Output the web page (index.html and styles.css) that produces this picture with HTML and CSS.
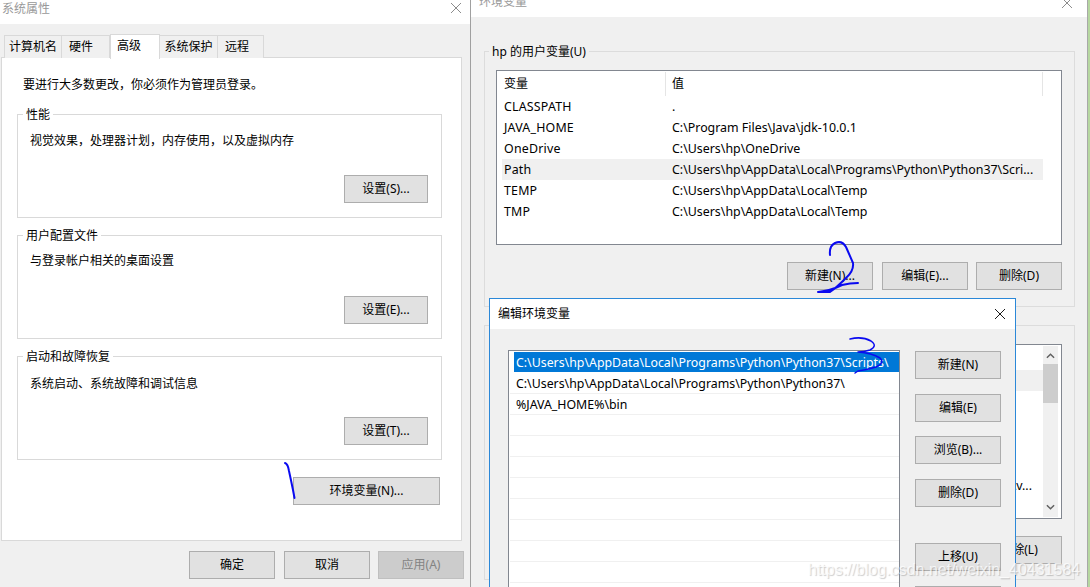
FILE: index.html
```html
<!DOCTYPE html>
<html lang="zh-CN">
<head>
<meta charset="utf-8">
<title>环境变量</title>
<link rel="stylesheet" href="styles.css">
</head>
<body>
<div class="desktop">

  <section class="window sys-window">
    <header class="titlebar sys-title">
      <span class="title-text muted">系统属性</span>
      <svg class="close" viewBox="0 0 10 10"><path d="M0 0L10 10M10 0L0 10"/></svg>
    </header>
    <nav class="tabs">
      <span class="tab">计算机名</span>
      <span class="tab tab-short">硬件</span>
      <span class="tab tab-active">高级</span>
      <span class="tab">系统保护</span>
      <span class="tab tab-last">远程</span>
    </nav>
    <div class="panel">
      <p class="intro">要进行大多数更改，你必须作为管理员登录。</p>
      <div class="sys-group">
        <span class="legend legend-white">性能</span>
        <p class="group-text">视觉效果，处理器计划，内存使用，以及虚拟内存</p>
        <button class="btn btn-set">设置(S)...</button>
      </div>
      <div class="sys-group sys-group-mid">
        <span class="legend legend-white">用户配置文件</span>
        <p class="group-text">与登录帐户相关的桌面设置</p>
        <button class="btn btn-set">设置(E)...</button>
      </div>
      <div class="sys-group sys-group-low">
        <span class="legend legend-white">启动和故障恢复</span>
        <p class="group-text">系统启动、系统故障和调试信息</p>
        <button class="btn btn-set">设置(T)...</button>
      </div>
      <button class="btn btn-env">环境变量(N)...</button>
    </div>
    <footer class="sys-actions">
      <button class="btn">确定</button>
      <button class="btn">取消</button>
      <button class="btn btn-disabled">应用(A)</button>
    </footer>
  </section>

  <section class="window env-window">
    <header class="titlebar env-title">
      <span class="title-text muted env-title-text">环境变量</span>
      <svg class="close env-close" viewBox="0 0 10 10"><path d="M0 0L10 10M10 0L0 10"/></svg>
    </header>
    <div class="env-group env-group-user">
      <span class="legend legend-env">hp 的用户变量(U)</span>
      <div class="listbox">
        <div class="list-main">
          <div class="list-head">
            <span class="head-cell">变量</span>
            <span class="head-cell head-value">值</span>
          </div>
          <div class="var-row"><span class="var-name">CLASSPATH</span><span>.</span></div>
          <div class="var-row"><span class="var-name">JAVA_HOME</span><span>C:\Program Files\Java\jdk-10.0.1</span></div>
          <div class="var-row"><span class="var-name">OneDrive</span><span>C:\Users\hp\OneDrive</span></div>
          <div class="var-row var-row-hl"><span class="var-name">Path</span><span>C:\Users\hp\AppData\Local\Programs\Python\Python37\Scri...</span></div>
          <div class="var-row"><span class="var-name">TEMP</span><span>C:\Users\hp\AppData\Local\Temp</span></div>
          <div class="var-row"><span class="var-name">TMP</span><span>C:\Users\hp\AppData\Local\Temp</span></div>
        </div>
      </div>
      <div class="env-actions">
        <button class="btn">新建(N)...</button>
        <button class="btn">编辑(E)...</button>
        <button class="btn">删除(D)</button>
      </div>
    </div>
    <div class="env-group env-group-sys">
      <div class="listbox">
        <div class="list-main">
          <div class="list-head list-head-blank"></div>
          <div class="var-row var-row-hl"></div>
          <div class="var-row"></div>
          <div class="var-row"></div>
          <div class="var-row"></div>
          <div class="var-row"></div>
          <div class="var-row var-row-end">\v...</div>
        </div>
        <div class="scrollbar">
          <svg class="chev" viewBox="0 0 10 6"><path d="M1 5L5 1L9 5"/></svg>
          <div class="thumb"></div>
          <svg class="chev chev-down" viewBox="0 0 10 6"><path d="M1 1L5 5L9 1"/></svg>
        </div>
      </div>
      <div class="env-actions">
        <button class="btn">新建(W)...</button>
        <button class="btn">编辑(I)...</button>
        <button class="btn">删除(L)</button>
      </div>
    </div>
  </section>

  <section class="window edit-window">
    <header class="titlebar edit-title">
      <span class="title-text">编辑环境变量</span>
      <svg class="close edit-close" viewBox="0 0 10 10"><path d="M0 0L10 10M10 0L0 10"/></svg>
    </header>
    <div class="edit-body">
      <div class="path-list">
        <div class="path-row path-row-selected">C:\Users\hp\AppData\Local\Programs\Python\Python37\Scripts\</div>
        <div class="path-row">C:\Users\hp\AppData\Local\Programs\Python\Python37\</div>
        <div class="path-row">%JAVA_HOME%\bin</div>
        <div class="path-row"></div>
        <div class="path-row"></div>
        <div class="path-row"></div>
        <div class="path-row"></div>
        <div class="path-row"></div>
        <div class="path-row"></div>
        <div class="path-row"></div>
        <div class="path-row"></div>
      </div>
      <div class="edit-actions">
        <button class="btn">新建(N)</button>
        <button class="btn">编辑(E)</button>
        <button class="btn">浏览(B)...</button>
        <button class="btn">删除(D)</button>
        <button class="btn btn-gap">上移(U)</button>
        <button class="btn" aria-label="下移(O)"></button>
      </div>
    </div>
  </section>

  <svg class="ink" viewBox="0 0 1090 587">
    <path d="M285 463Q288 464 289 471Q291 480 293 490L294.500 498"/>
    <path d="M830 255Q829 246 835 243Q842 240 846 247Q850 256 853 263Q854 271 846 278Q836 288 830 292L818 292Q830 291 842 285Q850 283 858 283"/>
    <path class="ink-thin" d="M850 339Q862 336 871 341Q878 346 870 350Q864 352 858 352Q872 353 880 358Q885 363 876 367Q866 370 858 371L855 373"/>
  </svg>

  <span class="watermark">https://blog.csdn.net/weixin_40431584</span>
</div>
</body>
</html>
```

FILE: styles.css
```css
* { box-sizing: border-box; }
html, body { margin: 0; padding: 0; overflow: hidden; }
body {
  font-family: "Noto Sans", "Noto Sans CJK SC", sans-serif;
  font-size: 12px;
  color: #000;
  background: #fff;
}
p { margin: 0; }

.desktop { position: relative; width: 1090px; height: 587px; overflow: hidden; background: #b6d7a0; }
.window { position: absolute; background: #f0f0f0; }

.titlebar {
  display: flex;
  align-items: center;
  justify-content: space-between;
  background: #fff;
}
.title-text { line-height: 17px; }
.muted { color: #999; }
.close { width: 10px; height: 10px; fill: none; stroke: #8c8c8c; stroke-width: 1; }

.btn {
  width: 86px;
  height: 28px;
  padding: 0;
  border: 1px solid #adadad;
  background: #e1e1e1;
  color: #000;
  font: inherit;
  line-height: 26px;
}
.btn-disabled { background: #cccccc; border-color: #bfbfbf; color: #838383; }

/* system properties */
.sys-window {
  left: 0;
  top: 0;
  width: 471px;
  height: 587px;
  border-right: 1px solid #a0a0a0;
}
.sys-title { height: 24px; padding: 0 9px 8px 2px; }
.tabs { display: flex; align-items: flex-end; height: 34px; padding-left: 4px; margin-bottom: -1px; position: relative; }
.tab {
  width: 58px;
  height: 23px;
  border: 1px solid #d9d9d9;
  border-left-width: 0;
  border-bottom-width: 0;
  text-align: center;
  line-height: 22px;
  background: #f0f0f0;
}
.tabs .tab:first-child { border-left-width: 1px; }
.tab-short { width: 48px; padding-right: 9px; }
.tab-last { width: 46px; padding-right: 7px; }
.tab-active {
  width: 50px;
  height: 25px;
  background: #fff;
  border-left-width: 1px;
  margin-bottom: -1px;
  padding-right: 12px;
  line-height: 22px;
  position: relative;
  z-index: 1;
}
.panel {
  width: 461px;
  height: 484px;
  margin-left: 1px;
  border: 1px solid #d9d9d9;
  background: #fff;
  padding: 18px 0 0 15px;
  display: flex;
  flex-direction: column;
}
.intro { margin-left: 6px; line-height: 18px; margin-bottom: 20px; }
.sys-group {
  position: relative;
  width: 425px;
  height: 104px;
  margin-bottom: 17px;
  border: 1px solid #d9d9d9;
  padding: 17px 13px 14px 12px;
  display: flex;
  flex-direction: column;
  justify-content: space-between;
  align-items: flex-start;
}
.sys-group-mid { padding-top: 16px; }
.sys-group-low { padding-top: 18px; }
.group-text { line-height: 18px; }
.btn-set { width: 84px; align-self: flex-end; }
.legend {
  position: absolute;
  left: 5px;
  top: -9px;
  padding: 0 3px;
  line-height: 17px;
  background: #f0f0f0;
}
.legend-white { background: #fff; }
.legend-env { left: 4px; padding: 0 3px; }
.btn-env { width: 147px; align-self: flex-end; margin: 0 21px 0 0; }
.sys-actions { display: flex; gap: 9px; justify-content: flex-end; padding: 10px 6px 0 0; }
.sys-actions .btn-disabled { margin-left: -1px; }

/* environment variables */
.env-window {
  left: 471px;
  top: 0;
  width: 617px;
  height: 587px;
  border-right: 1px solid #a8a8a8;
}
.env-title { height: 17px; padding: 0 15px 0 8px; overflow: hidden; }
.env-title-text { margin-top: -14px; }
.env-close { margin-top: -12px; }
.env-group {
  position: relative;
  width: 591px;
  margin-left: 13px;
  border: 1px solid #dcdcdc;
  padding: 18px 12px 16px 11px;
}
.env-group-user { margin-top: 34px; }
.env-group-sys { margin-top: 18px; padding-bottom: 15px; }
.listbox {
  display: flex;
  width: 566px;
  height: 175px;
  border: 1px solid #828790;
  background: #fff;
  padding-left: 5px;
}
.list-main { width: 541px; flex: none; }
.list-head { display: grid; grid-template-columns: 164px 1fr; height: 24px; margin-top: 1px; }
.list-head-blank { display: block; }
.head-cell { padding-left: 2px; line-height: 24px; border-right: 1px solid #e5e5e5; }
.head-value { padding-left: 6px; }
.var-row { display: grid; grid-template-columns: 168px 1fr; height: 21px; line-height: 21px; padding-left: 2px; white-space: nowrap; font-size: 12.4px; }
.var-name { letter-spacing: 0.2px; }
.var-row-hl { background: #f0f0f0; }
.var-row-end { display: block; text-align: right; padding-right: 11px; }
.env-actions { display: flex; gap: 9px; justify-content: flex-end; margin-top: 17px; }
.env-actions .btn:last-child { margin-left: -1px; }
.scrollbar {
  width: 15px;
  margin-top: 1px;
  margin-bottom: 1px;
  background: #f0f0f0;
  display: flex;
  flex-direction: column;
  align-items: center;
}
.chev { width: 9px; height: 6px; margin-top: 7px; fill: none; stroke: #606060; stroke-width: 1.6; flex: none; }
.chev-down { margin-top: auto; margin-bottom: 7px; }
.thumb { width: 15px; height: 39px; margin-top: 5px; background: #cdcdcd; flex: none; }

/* edit dialog */
.edit-window {
  left: 489px;
  top: 298px;
  width: 527px;
  height: 320px;
  border: 1px solid #2b88d8;
}
.edit-title { height: 30px; padding: 0 10px 2px 8px; }
.edit-close { stroke: #1a1a1a; margin-top: 2px; }
.edit-body { display: flex; align-items: flex-start; padding: 21px 0 0 18px; gap: 15px; }
.path-list {
  width: 392px;
  height: 300px;
  flex: none;
  border: 1px solid #828790;
  background: #fff;
  padding: 1px 0 0 1px;
}
.path-row {
  height: 21px;
  line-height: 21px;
  padding-left: 6px;
  border-bottom: 1px solid #f0f0f0;
  white-space: nowrap;
  font-size: 12.35px;
}
.path-row-selected { height: 20px; margin: 0 0 1px 4px; padding-left: 2px; background: #0078d7; color: #fff; border-bottom: 0; }
.edit-actions { display: flex; flex-direction: column; gap: 14.67px; padding-top: 1px; }
.btn-gap { margin-top: 21.33px; }

/* overlays */
.ink {
  position: absolute;
  left: 0;
  top: 0;
  width: 1090px;
  height: 587px;
  fill: none;
  stroke: #0a0af0;
  stroke-width: 2;
  stroke-linecap: round;
  stroke-linejoin: round;
  pointer-events: none;
}
.ink-thin { stroke-width: 1.5; }
.watermark {
  position: absolute;
  left: 808px;
  top: 560px;
  font-family: "Liberation Sans", sans-serif;
  font-size: 16px;
  line-height: 20px;
  color: rgba(255, 255, 255, 0.75);
  text-shadow: 1px 1px 1px rgba(0, 0, 0, 0.2);
  white-space: nowrap;
}
```
